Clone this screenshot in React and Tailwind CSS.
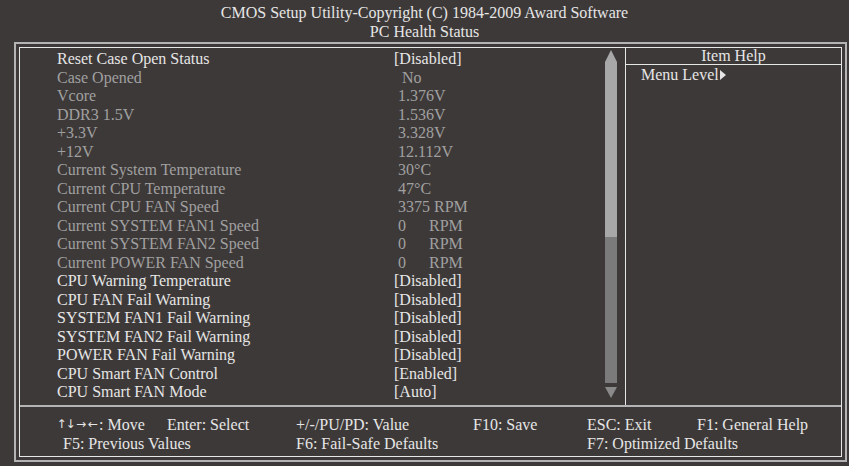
import React from "react";

const rows = [
  { label: "Reset Case Open Status", value: "[Disabled]", on: true },
  { label: "Case Opened", value: " No" },
  { label: "Vcore", value: "1.376V" },
  { label: "DDR3 1.5V", value: "1.536V" },
  { label: "+3.3V", value: "3.328V" },
  { label: "+12V", value: "12.112V" },
  { label: "Current System Temperature", value: "30°C" },
  { label: "Current CPU Temperature", value: "47°C" },
  { label: "Current CPU FAN Speed", value: "3375 RPM" },
  { label: "Current SYSTEM FAN1 Speed", rpm: "0" },
  { label: "Current SYSTEM FAN2 Speed", rpm: "0" },
  { label: "Current POWER FAN Speed", rpm: "0" },
  { label: "CPU Warning Temperature", value: "[Disabled]", on: true },
  { label: "CPU FAN Fail Warning", value: "[Disabled]", on: true },
  { label: "SYSTEM FAN1 Fail Warning", value: "[Disabled]", on: true },
  { label: "SYSTEM FAN2 Fail Warning", value: "[Disabled]", on: true },
  { label: "POWER FAN Fail Warning", value: "[Disabled]", on: true },
  { label: "CPU Smart FAN Control", value: "[Enabled]", on: true },
  { label: "CPU Smart FAN Mode", value: "[Auto]", on: true },
];

const Row = ({ label, value, rpm, on }) => (
  <div
    className={`flex h-[18.5px] items-center leading-none ${
      on ? "text-[#e6e6e6]" : "text-[#a0a0a0]"
    }`}
  >
    <span className="w-[337px] pl-[37px] box-content whitespace-nowrap">{label}</span>
    {rpm ? (
      <span className="flex pl-[4px]">
        <span className="w-[31px]">{rpm}</span>
        <span>RPM</span>
      </span>
    ) : (
      <span className={on ? "" : "pl-[4px] whitespace-pre"}>{value}</span>
    )}
  </div>
);

const ScrollBar = () => (
  <div className="flex w-[12px] flex-col items-center">
    <svg width="12" height="12" viewBox="0 0 12 12">
      <polygon points="6,0 12,12 0,12" fill="#a8a8a8" />
    </svg>
    <div className="h-[175px] w-[12px] bg-[#a8a8a8]" />
    <div className="h-[146px] w-[12px] bg-[#7b7b7b]" />
    <svg width="12" height="12" viewBox="0 0 12 12" className="mt-[4px]">
      <polygon points="0,0 12,0 6,11" fill="#8a8a8a" />
    </svg>
  </div>
);

const Arrow = ({ ch, w }) => (
  <span className={`inline-flex justify-center ${w}`}>{ch}</span>
);

export default function App() {
  return (
    <div
      className="h-[466px] w-[849px] overflow-hidden bg-[#3d3938] text-[16px] text-[#e6e6e6]"
      style={{ fontFamily: '"Liberation Serif", "Times New Roman", serif' }}
    >
      {/* Title */}
      <div className="flex h-[42px] flex-col items-center pt-[3px] leading-[19px]">
        <div>CMOS Setup Utility-Copyright (C) 1984-2009 Award Software</div>
        <div>PC Health Status</div>
      </div>

      {/* Double frame */}
      <div className="ml-[14px] h-[420px] w-[833px] border-2 border-[#b4b4b4] p-[3px]">
        <div className="flex h-full flex-col border border-[#e6e6e6]">
          <div className="flex h-[359px] border-b-2 border-[#b4b4b4]">
            {/* Items */}
            <div className="flex w-[606px] border-r border-[#e6e6e6]">
              <div className="flex-1 pt-[2px]">
                {rows.map((r) => (
                  <Row key={r.label} {...r} />
                ))}
              </div>
              <div className="mr-[8px] pt-[2px]">
                <ScrollBar />
              </div>
            </div>

            {/* Item help */}
            <div className="flex flex-1 flex-col">
              <div className="flex h-[17px] items-center justify-center border-b border-[#e6e6e6] leading-none">
                Item Help
              </div>
              <div className="flex h-[20px] items-center pl-[15px] leading-none">
                Menu Level
                <svg width="6" height="10" viewBox="0 0 6 10" className="ml-[1px]">
                  <polygon points="0,0 6,5 0,10" fill="#e6e6e6" />
                </svg>
              </div>
            </div>
          </div>

          {/* Key legend */}
          <div className="flex flex-col pt-[8px] leading-[19px]">
            <div className="flex whitespace-nowrap">
              <span className="flex w-[110px] pl-[37px] box-content">
                <span
                  className="flex items-center text-[12px]"
                  style={{ fontFamily: '"DejaVu Sans", sans-serif' }}
                >
                  <Arrow ch="↑" w="w-[9px]" />
                  <Arrow ch="↓" w="w-[9px]" />
                  <Arrow ch="→" w="w-[12px]" />
                  <Arrow ch="←" w="w-[12px]" />
                </span>
                <span>: Move</span>
              </span>
              <span className="w-[129px]">Enter: Select</span>
              <span className="w-[177px]">+/-/PU/PD: Value</span>
              <span className="w-[114px]">F10: Save</span>
              <span className="w-[110px]">ESC: Exit</span>
              <span>F1: General Help</span>
            </div>
            <div className="flex whitespace-nowrap">
              <span className="w-[233px] pl-[43px] box-content">F5: Previous Values</span>
              <span className="w-[291px]">F6: Fail-Safe Defaults</span>
              <span>F7: Optimized Defaults</span>
            </div>
          </div>
        </div>
      </div>
    </div>
  );
}
